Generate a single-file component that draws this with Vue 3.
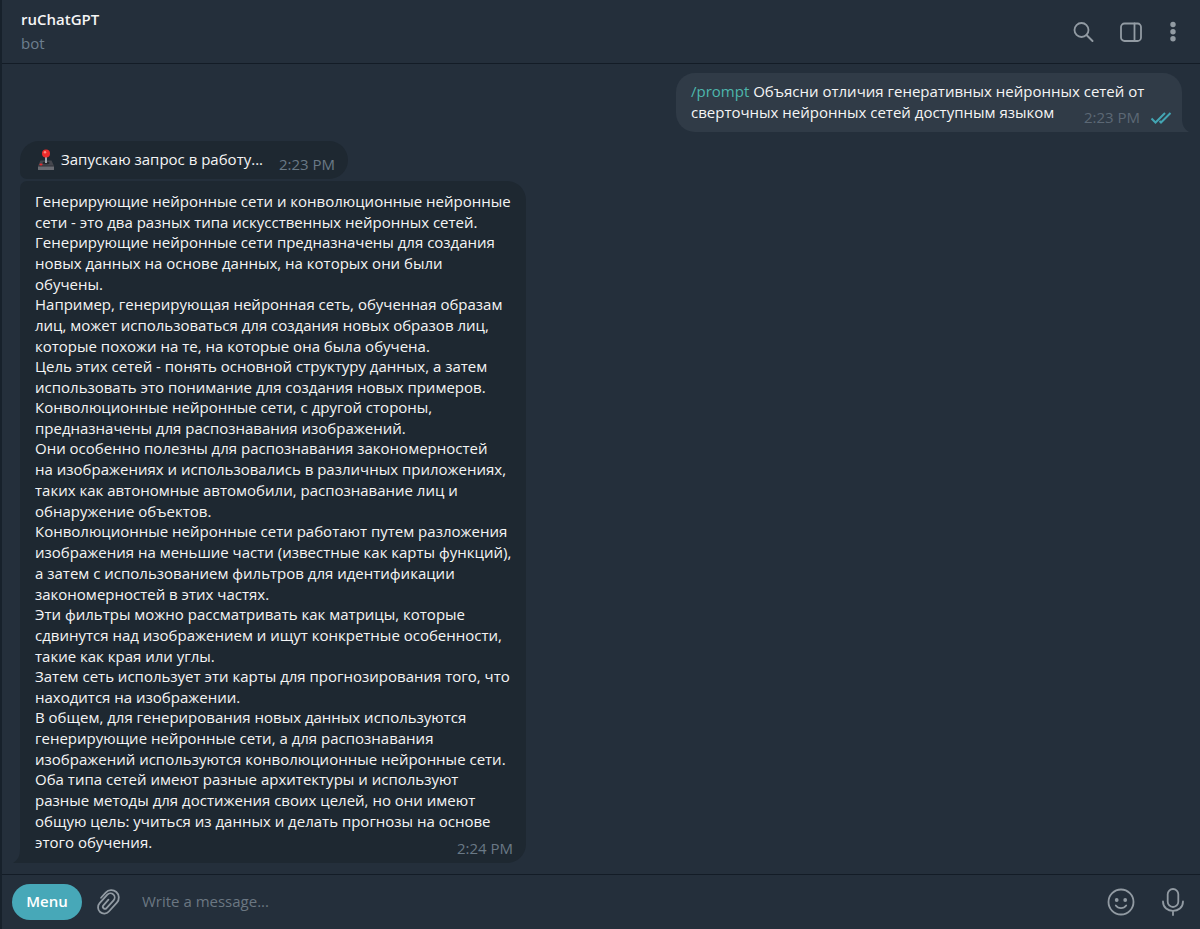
<template>
  <div class="chat">
    <header class="header">
      <div class="title">
        <h1>ruChatGPT</h1>
        <p>bot</p>
      </div>
      <div class="actions">
        <button class="icon" aria-label="Search">
          <svg width="24" height="24" viewBox="0 0 24 24">
            <circle cx="10.500" cy="10" r="7" />
            <path d="M15.500 15l6 6" stroke-width="2" />
          </svg>
        </button>
        <button class="icon" aria-label="Info panel">
          <svg width="24" height="24" viewBox="0 0 24 24">
            <rect x="2" y="3.500" width="20" height="17.500" rx="3.500" />
            <path d="M15.500 3.500v17.500" />
          </svg>
        </button>
        <button class="icon more" aria-label="More">
          <svg width="8" height="24" viewBox="0 0 8 24">
            <g class="solid">
              <circle cx="4" cy="4.500" r="2.700" />
              <circle cx="4" cy="11.700" r="2.700" />
              <circle cx="4" cy="18.800" r="2.700" />
            </g>
          </svg>
        </button>
      </div>
    </header>

    <main class="messages">
      <div class="message out">
        <p><a href="#" @click.prevent="draft = '/prompt '">/prompt</a> {{ question }}</p>
        <span class="time">2:23 PM
          <svg width="22" height="14" viewBox="0 0 22 14">
            <path d="M1.500 7.500l4 4L15 2M9.500 10l1.500 1.500L20.500 2" />
          </svg>
        </span>
        <svg class="tail" width="7" height="14" viewBox="0 0 7 14">
          <path d="M0 0c0 7 2 11 7 14H0z" />
        </svg>
      </div>

      <div class="message in first">
        <svg class="joystick" width="18" height="22" viewBox="0 0 18 22">
          <path d="M3.500 11.500h11L17 17H1z" fill="#45474e" />
          <path d="M1 17h16v3.500q0 .5-.5.5h-15q-.5 0-.5-.5z" fill="#696b72" />
          <path d="M1 16.500h16v1H1z" fill="#303238" />
          <ellipse cx="9" cy="14" rx="3.500" ry="1.300" fill="#25272c" />
          <path d="M8 7h2v7H8z" fill="#a0a5ad" />
          <circle cx="9" cy="4.500" r="4" fill="#ee2b2b" />
          <circle cx="8" cy="3.200" r="1.200" fill="#ff8a80" />
          <ellipse cx="4" cy="15.500" rx="1.600" ry="1" fill="#e8282c" />
        </svg>
        <p>Запускаю запрос в работу...</p>
        <span class="time">2:23 PM</span>
      </div>

      <div class="message in last">
        <p v-for="(text, i) in answer" :key="i">{{ text }}</p>
        <span class="time">2:24 PM</span>
        <svg class="tail" width="7" height="14" viewBox="0 0 7 14">
          <path d="M7 0c0 7-2 11-7 14h7z" />
        </svg>
      </div>
    </main>

    <footer class="composer">
      <button class="menu">Menu</button>
      <button class="icon" aria-label="Attach file">
        <svg width="24" height="28" viewBox="0 0 24 28">
          <path transform="rotate(42 12 14)" d="M4 15.500V8.500a7.500 7.500 0 0 1 15 0V20.500a6.200 6.200 0 0 1-12.400 0V9a4.200 4.200 0 0 1 8.400 0V19.500a2.100 2.100 0 0 1-4.200 0V12" />
        </svg>
      </button>
      <input v-model="draft" type="text" aria-label="Message" placeholder="Write a message..." />
      <button class="icon" aria-label="Emoji">
        <svg width="28" height="28" viewBox="0 0 28 28">
          <circle cx="14" cy="14" r="12.500" />
          <g class="solid">
            <circle cx="9.700" cy="12" r="1.900" />
            <circle cx="18.200" cy="12" r="1.900" />
          </g>
          <path d="M8.800 17.500c2.500 3.500 7.900 3.500 10.400 0" />
        </svg>
      </button>
      <button class="icon mic" aria-label="Record voice message">
        <svg width="24" height="28" viewBox="0 0 24 28">
          <rect x="6.700" y="1" width="10.600" height="18" rx="5.300" />
          <path d="M2 13.500c0 12.500 20 12.500 20 0M12 23v4" />
        </svg>
      </button>
    </footer>
  </div>
</template>

<script setup>
import { ref } from 'vue'

const draft = ref('')

const question = `Объясни отличия генеративных нейронных сетей от
сверточных нейронных сетей доступным языком`

const answer = [
  `Генерирующие нейронные сети и конволюционные нейронные
сети - это два разных типа искусственных нейронных сетей.`,
  `Генерирующие нейронные сети предназначены для создания
новых данных на основе данных, на которых они были
обучены.`,
  `Например, генерирующая нейронная сеть, обученная образам
лиц, может использоваться для создания новых образов лиц,
которые похожи на те, на которые она была обучена.`,
  `Цель этих сетей - понять основной структуру данных, а затем
использовать это понимание для создания новых примеров.`,
  `Конволюционные нейронные сети, с другой стороны,
предназначены для распознавания изображений.`,
  `Они особенно полезны для распознавания закономерностей
на изображениях и использовались в различных приложениях,
таких как автономные автомобили, распознавание лиц и
обнаружение объектов.`,
  `Конволюционные нейронные сети работают путем разложения
изображения на меньшие части (известные как карты функций),
а затем с использованием фильтров для идентификации
закономерностей в этих частях.`,
  `Эти фильтры можно рассматривать как матрицы, которые
сдвинутся над изображением и ищут конкретные особенности,
такие как края или углы.`,
  `Затем сеть использует эти карты для прогнозирования того, что
находится на изображении.`,
  `В общем, для генерирования новых данных используются
генерирующие нейронные сети, а для распознавания
изображений используются конволюционные нейронные сети.`,
  `Оба типа сетей имеют разные архитектуры и используют
разные методы для достижения своих целей, но они имеют
общую цель: учиться из данных и делать прогнозы на основе
этого обучения.`
]
</script>

<style>
body {
  margin: 0;
  background: #242f3b;
}
</style>

<style scoped>
.chat {
  box-sizing: border-box;
  min-height: 100vh;
  display: flex;
  flex-direction: column;
  border-left: 2px solid #17212b;
  background: #242f3b;
  color: #f5f5f5;
  font-family: "Open Sans", "Noto Sans", sans-serif;
  font-size: 15px;
  line-height: 21px;
}

h1,
p {
  margin: 0;
}

.header {
  display: flex;
  justify-content: space-between;
  align-items: center;
  height: 63px;
  padding: 0 23px 0 19px;
  border-bottom: 1px solid #131c26;
}

.title {
  padding-bottom: 2px;
}

.title h1 {
  font-size: 15px;
  font-weight: 600;
  line-height: 24px;
}

.title p {
  color: #6d7f8f;
  line-height: 24px;
}

.actions {
  display: flex;
  align-items: center;
  gap: 24px;
}

.icon {
  display: flex;
  padding: 0;
  border: none;
  background: none;
  color: #929ba3;
  cursor: pointer;
}

.icon svg {
  fill: none;
  stroke: currentColor;
  stroke-width: 1.8;
  stroke-linecap: round;
}

.icon .solid {
  fill: currentColor;
  stroke: none;
}

.more {
  margin-left: 2px;
}

.messages {
  flex: 1;
  display: flex;
  flex-direction: column;
  align-items: flex-start;
  padding: 9px 18px 11px;
}

.message {
  position: relative;
  box-sizing: border-box;
  max-width: 100%;
  padding: 8px 14px 9px 15px;
  background: #1e2831;
}

.message p {
  white-space: pre-line;
}

.time {
  position: absolute;
  right: 13px;
  bottom: 4px;
  display: flex;
  align-items: center;
  gap: 10px;
  color: #6a7986;
}

.out {
  align-self: flex-end;
  width: 506px;
  margin-bottom: 9px;
  border-radius: 19px 19px 0 19px;
  background: #303b47;
}

.out a {
  color: #4db6ac;
  text-decoration: none;
}

.out .time {
  right: 10px;
  color: #5c6875;
}

.out .time svg {
  fill: none;
  stroke: #43a5b3;
  stroke-width: 2;
}

.tail {
  position: absolute;
  right: 100%;
  bottom: 0;
  fill: #1e2831;
}

.out .tail {
  right: auto;
  left: 100%;
  fill: #303b47;
}

.first {
  display: flex;
  width: 328px;
  gap: 6px;
  margin-bottom: 2px;
  border-radius: 19px 19px 19px 7px;
}

.joystick {
  margin: 0 0 -1px 2px;
}

.last {
  width: 506px;
  padding-top: 10px;
  padding-bottom: 10px;
  border-radius: 7px 19px 19px 0;
}

.last p + p {
  margin-top: -1px;
}

.composer {
  display: flex;
  align-items: center;
  height: 54px;
  padding: 0 15px 0 10px;
  border-top: 1px solid #131c26;
}

.menu {
  width: 70px;
  height: 36px;
  margin-right: 14px;
  padding: 0 0 2px;
  border: none;
  border-radius: 18px;
  background: #47a8b8;
  color: #fff;
  font: 600 15px "Open Sans", sans-serif;
  cursor: pointer;
}

.composer input {
  flex: 1;
  min-width: 0;
  padding: 0 22px 2px;
  border: none;
  outline: none;
  background: none;
  color: #f5f5f5;
  font: 15px "Open Sans", sans-serif;
}

.composer input::placeholder {
  color: #6b7782;
  opacity: 1;
}

.mic {
  margin-left: 26px;
}
</style>
